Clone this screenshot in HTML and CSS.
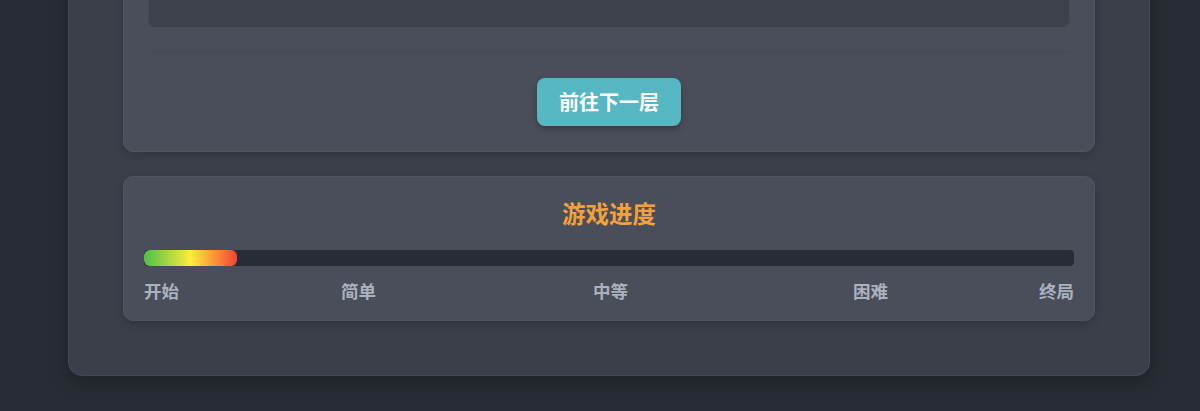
FILE: index.html
```html
<!DOCTYPE html>
<html lang="zh-CN">
<head>
    <meta charset="UTF-8">
    <title>地牢探险</title>
    <link rel="stylesheet" href="styles.css">
</head>
<body>
<div class="game">
    <div class="panel floor">
        <div class="log"></div>
        <div class="actions">
            <button class="btn-next">前往下一层</button>
        </div>
    </div>

    <div class="panel progress">
        <h2 class="progress-title">游戏进度</h2>
        <div class="track">
            <div class="fill" style="width: 10%"></div>
        </div>
        <ul class="stages">
            <li>开始</li>
            <li>简单</li>
            <li>中等</li>
            <li>困难</li>
            <li>终局</li>
        </ul>
    </div>
</div>
</body>
</html>
```

FILE: styles.css
```css
*{
    margin: 0;padding: 0;
    box-sizing: border-box;
}
ul,li{list-style: none}
body{
    background: #282c34;
    font-family: "Noto Sans CJK SC", "Noto Sans", sans-serif;
    color: #abb2bf;
    padding: 0 50px 35px 68px;
}
/* 外层容器，页面已滚到底部，顶部留在视口外 */
.game{
    width: 1082px;
    margin-top: -153px;
    padding: 54px 54px 54px;
    background: #3b3f4a;
    border: 1px solid #464a56;
    border-radius: 14px;
    box-shadow: 0 6px 18px rgba(0,0,0,0.25);
}
.panel{
    background: #4a4e5a;
    border: 1px solid #50545f;
    border-radius: 10px;
    box-shadow: 0 3px 8px rgba(0,0,0,0.18);
}
.panel + .panel{margin-top: 24px}

.floor{padding: 25px 24px 25px}
.log{
    height: 100px;
    background: #3d414c;
    border: 1px solid #454955;
    border-radius: 8px;
}
.actions{
    margin-top: 24px;
    padding-top: 25px;
    border-top: 1px solid #454955;
    display: flex;
    justify-content: center;
}
.btn-next{
    font-family: inherit;
    font-size: 20px;
    font-weight: 700;
    line-height: 28px;
    color: #fff;
    background: #56b6c2;
    border: none;
    border-radius: 8px;
    padding: 10px 22px;
    box-shadow: 0 3px 6px rgba(0,0,0,0.25);
}

.progress{padding: 21px 20px 17px}
.progress-title{
    text-align: center;
    font-size: 23.5px;
    font-weight: 700;
    line-height: 30px;
    color: #f5a13a;
    margin-bottom: 22px;
}
.track{
    height: 16px;
    background: #282c34;
    border-radius: 4px;
    overflow: hidden;
}
.fill{
    height: 100%;
    border-radius: 6px;
    background: linear-gradient(90deg, #4cbf4a 0%, #ffeb3b 50%, #f44336 100%);
}
/* 各阶段标签 */
.stages{
    display: grid;
    grid-template-columns: 197px 252px 260px 1fr auto;
    margin-top: 13px;
    font-size: 17.5px;
    font-weight: 700;
    line-height: 24px;
    color: #abb2bf;
}
```
